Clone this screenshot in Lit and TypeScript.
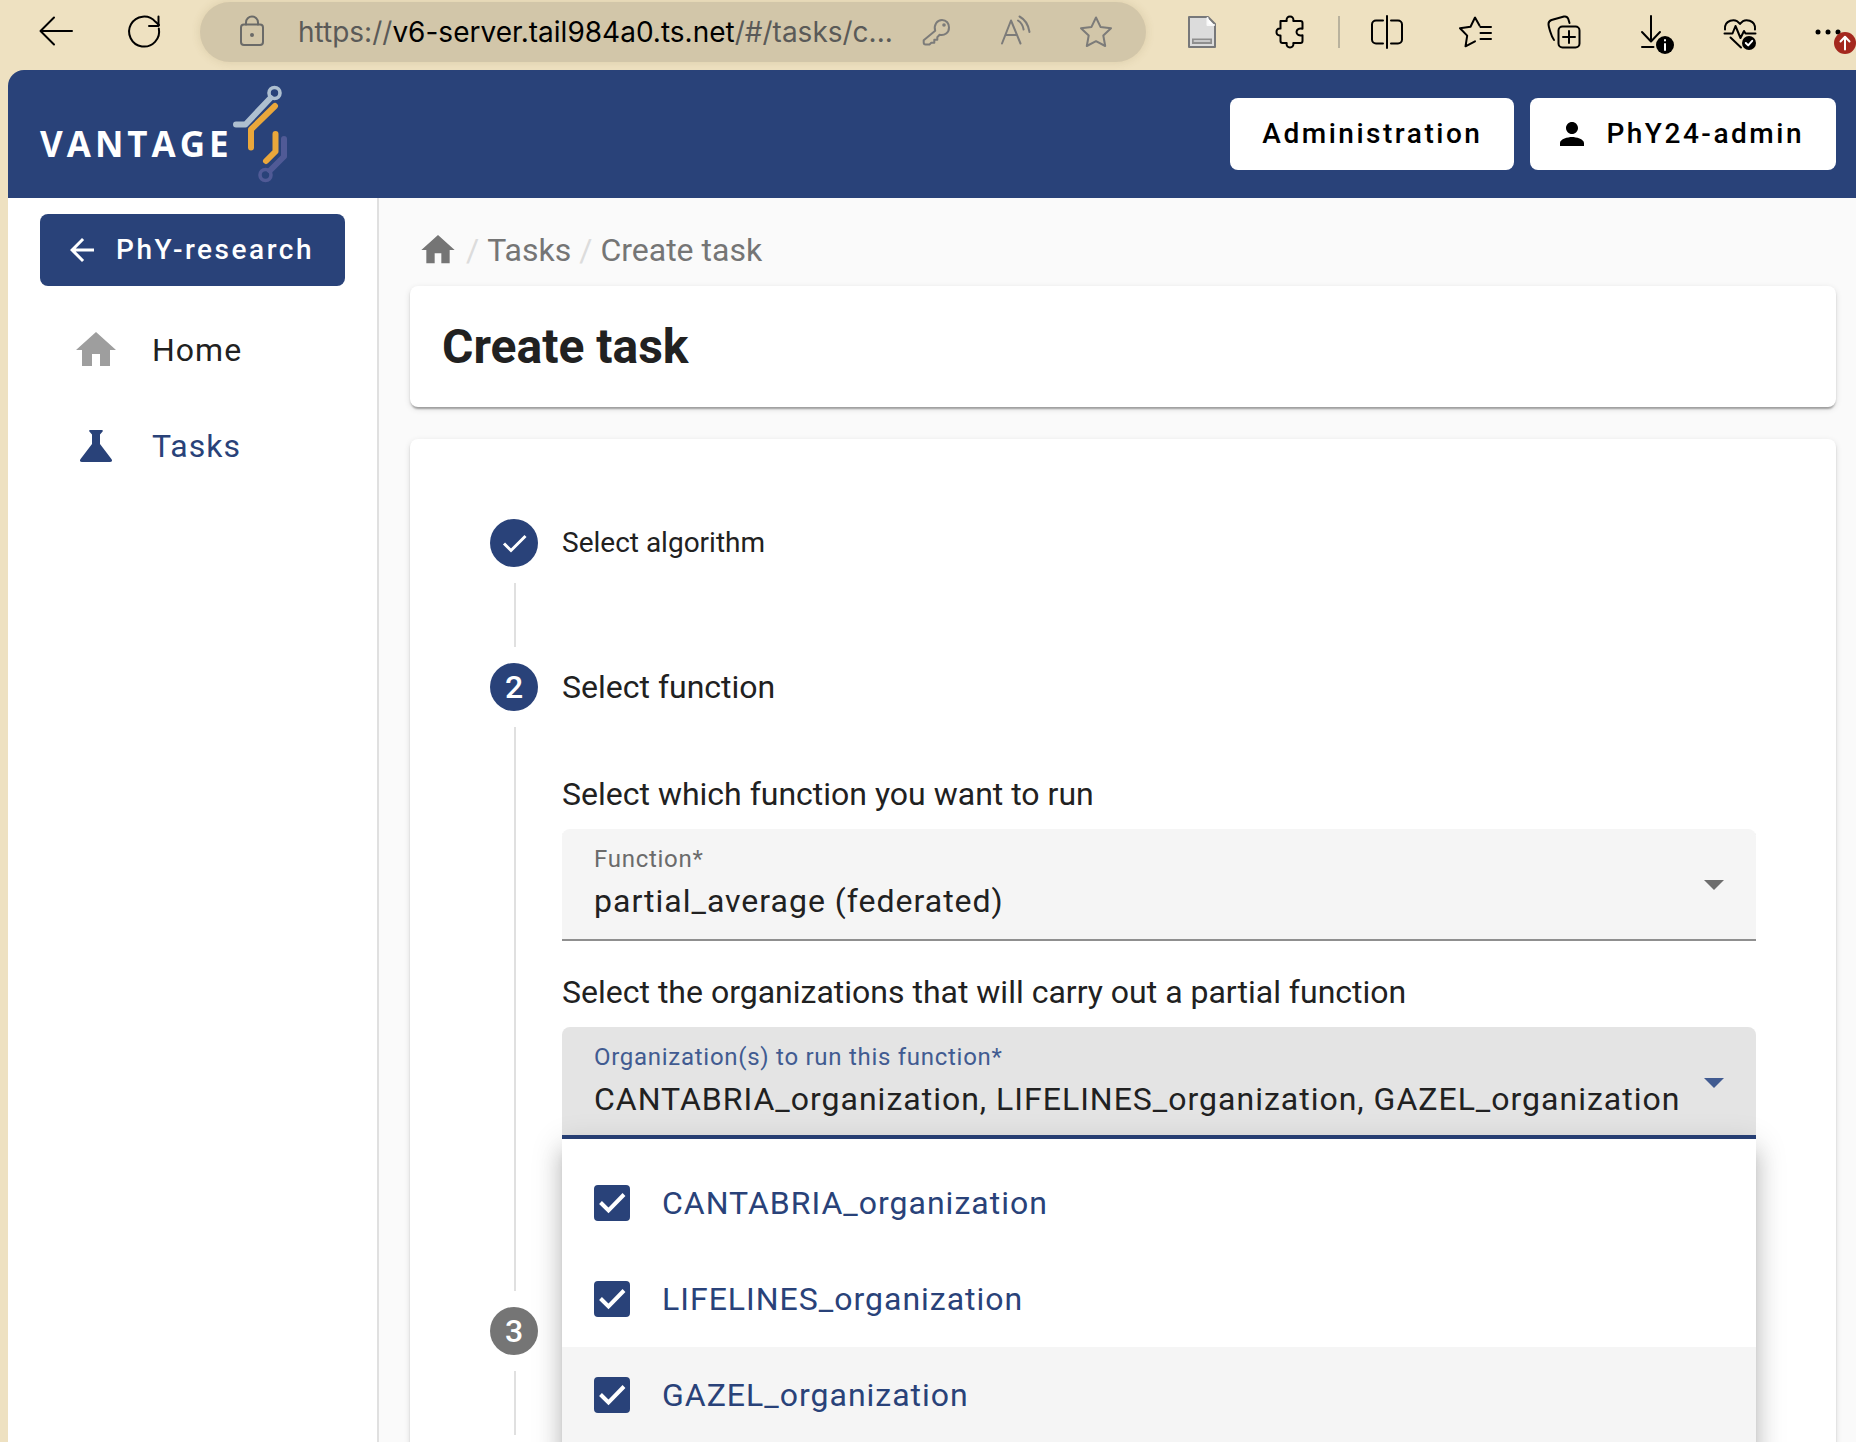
import { LitElement, html, svg, css } from "lit";
import { customElement, property, state } from "lit/decorators.js";
import { classMap } from "lit/directives/class-map.js";

/* Line icons for the browser toolbar, drawn on a 40 x 40 grid. */
const toolbarIcons: Record<string, unknown> = {
  back: svg`<path d="M36 19H5M18 5.500L4.500 19L18 32.500" />`,
  reload: svg`<path d="M34.800 16.500A15 15 0 1 1 31.500 9.800L35 13" /><path d="M34.500 4.500V14H25" />`,
  lock: svg`<rect x="9" y="12.500" width="22" height="20.500" rx="3" /><path d="M14 12.500V10.500a6 6 0 0 1 12 0V12.500" /><circle class="fill" cx="20" cy="23" r="2" />`,
  key: svg`<path d="M19.200 18.800C17.500 13 21 8 26 8c4.500 0 7 3.600 7 7.400 0 5.200-4.400 8.600-9.400 7.400l-2.300 2.400v2.600h-3v3h-3l-1.800 1.700H9.500c-1.300 0-1.800-.7-1.800-2v-2.300z" /><circle class="fill" cx="28" cy="13" r="1.800" />`,
  read: svg`<path d="M6 31.500L15 8.500L24.500 31.500M9.500 23H21" /><path d="M22 8.500c3 2 5 5.200 5.600 9M23.500 4.500c5.500 3 9 8.500 10 15.500" />`,
  star: svg`<path d="M20 5.500l4.500 9.400 10.500 1.400-7.700 7.200 1.900 10.500L20 29.200 10.800 34l1.900-10.500L5 16.300l10.500-1.400z" />`,
  page: svg`<path class="sheet" d="M7 5h19l7 7v23H7z" /><path class="fold" d="M25.500 6v7H32" /><rect class="band" x="10" y="26.500" width="20" height="5.500" /><path class="bandline" d="M12.500 29h15" />`,
  puzzle: svg`<path d="M10.500 9h6.200c-.7-3 1.300-4.500 3.300-4.500s4 1.500 3.300 4.500h7.200c1.200 0 2 .8 2 2v5.800c-3.400-1.200-6 .8-6 3.200s2.600 4.400 6 3.200V29c0 1.200-.8 2-2 2h-7.200c.7 3-1.300 4.500-3.300 4.500S16 34 16.700 31h-4.200c-1.200 0-2-.8-2-2v-5.600C7 23.700 6.500 21.500 6.500 20s.5-3.700 4-3.400z" />`,
  split: svg`<path d="M20 4v32M16 8.500H9a4 4 0 0 0-4 4v15a4 4 0 0 0 4 4h7M24 8.500h7a4 4 0 0 1 4 4v15a4 4 0 0 1-4 4h-7" />`,
  favorites: svg`<path d="M24.500 13.500L20 5.500l-4.500 9.300L5 16.300l7.200 7.300-1.700 10.700 9.500-5M25.500 15H36M25.500 21H36M25.500 27H36" />`,
  collections: svg`<rect x="15.500" y="14.500" width="21" height="21" rx="4" /><path d="M26 19v12M20 25h12M11 28C8 24 5.500 14 5.500 12c0-2 1-3.300 3-4L21 4.500c2.300-.5 3.500.5 4.300 2.500l1.200 4" />`,
  download: svg`<path d="M20 4v25M11 20l9 9.500L29 20M11 35h11.500" /><circle class="fill" cx="34" cy="33" r="9" /><path class="cut" d="M34 32v6M34 28v.6" />`,
  health: svg`<path d="M6 17.500c-1-9 10-12.500 15-5.500 5-7 16-3.500 15 5.500M5.500 21.500h8l3-7.500 5 12 3.500-7 1.500 2.500H36.500M11.500 25.500L22 35.500" /><circle class="fill" cx="30" cy="31" r="7" /><path class="cut" d="M26.800 31l2.400 2.400 4-4.600" />`,
  more: svg`<circle class="fill" cx="11" cy="20" r="2.500" /><circle class="fill" cx="21" cy="20" r="2.500" /><circle class="fill" cx="31" cy="20" r="2.500" /><circle class="alert" cx="38" cy="31" r="11" /><path class="cut" d="M38 37.500V25M33.500 29.500L38 24.800l4.500 4.700" />`,
};

@customElement("tool-icon")
class ToolIcon extends LitElement {
  static styles = css`
    :host { display: block; width: 40px; height: 40px; flex: none; }
    svg { display: block; width: 100%; height: 100%; overflow: visible; fill: none; stroke: currentColor; stroke-width: 2; stroke-linejoin: round; stroke-linecap: round; }
    .fill { fill: currentColor; stroke: none; }
    .cut { stroke: #fff; }
    .alert { fill: #a4281e; stroke: none; }
    .sheet { fill: #dcdcdc; stroke: #77787a; }
    .fold { fill: #fff; stroke: #f8f8f8; }
    .band { fill: #8e8e8e; stroke: none; }
    .bandline { stroke: #c9c9c9; }
  `;
  @property() name = "";
  render() {
    return html`<svg viewBox="0 0 40 40" aria-hidden="true">${toolbarIcons[this.name]}</svg>`;
  }
}

@customElement("browser-bar")
class BrowserBar extends LitElement {
  static styles = css`
    :host { display: block; }
    .bar { display: flex; align-items: center; height: 70px; padding: 0 0 0 12px; box-sizing: border-box; background: #eee1c1; overflow: hidden; }
    .tool { display: flex; align-items: center; justify-content: center; width: 88px; height: 60px; margin: 0 0 6px; padding: 0; border: 0; background: none; color: #000; flex: none; }
    .last { width: 73px; justify-content: flex-start; padding-left: 24px; box-sizing: border-box; }
    .address { display: flex; align-items: center; flex: 1; min-width: 0; height: 60px; margin: 0 12px 6px; padding: 0 10px 0 32px; box-sizing: border-box; border-radius: 30px; background: #d2c6a9; box-shadow: 0 0 10px rgba(120, 100, 50, 0.16); color: #6a6a68; }
    .url { flex: 1; min-width: 0; margin-left: 26px; overflow: hidden; white-space: nowrap; font: 28px/40px Inter, sans-serif; color: #5a5a58; }
    .host { color: #000; }
    .inner { width: 80px; color: #7c7b79; }
    .address .tool { margin: 0; }
    .divider { width: 2px; height: 32px; margin: 0 3px 6px 4px; background: #b9b29d; flex: none; }
  `;
  private tool(name: string, label: string, extra = "") {
    return html`<button class="tool ${extra}" type="button" aria-label=${label}><tool-icon name=${name}></tool-icon></button>`;
  }
  render() {
    return html`
      <div class="bar">
        ${this.tool("back", "Back")} ${this.tool("reload", "Reload")}
        <div class="address">
          <tool-icon name="lock"></tool-icon>
          <div class="url" role="textbox" tabindex="0" aria-label="Address">https://<span class="host">v6-server.tail984a0.ts.net</span>/#/tasks/c...</div>
          ${this.tool("key", "Passwords", "inner")} ${this.tool("read", "Read aloud", "inner")} ${this.tool("star", "Add favorite", "inner")}
        </div>
        ${this.tool("page", "Page extension")} ${this.tool("puzzle", "Extensions")}
        <span class="divider"></span>
        ${this.tool("split", "Split screen")} ${this.tool("favorites", "Favorites")} ${this.tool("collections", "Collections")}
        ${this.tool("download", "Downloads")} ${this.tool("health", "Browser essentials")} ${this.tool("more", "Settings and more", "last")}
      </div>
    `;
  }
}

const materialIcons: Record<string, string> = {
  home: "M10 20v-6h4v6h5v-8h3L12 3 2 12h3v8z",
  back: "M20 11H7.830l5.590-5.590L12 4l-8 8 8 8 1.410-1.410L7.830 13H20z",
  person: "M12 12c2.210 0 4-1.790 4-4s-1.790-4-4-4-4 1.790-4 4 1.790 4 4 4zm0 2c-2.670 0-8 1.340-8 4v2h16v-2c0-2.660-5.330-4-8-4z",
  science: "M9 4h6c.4 0 .6.500.3.800L14 6.200V11l5.800 7.600c.5.700.1 1.400-.8 1.400H5c-.9 0-1.300-.7-.8-1.400L10 11V6.200L8.700 4.800C8.400 4.500 8.600 4 9 4z",
};

const glyph = (name: string, cls: string) =>
  html`<svg class=${cls} viewBox="0 0 24 24" fill="currentColor" aria-hidden="true"><path d=${materialIcons[name]} /></svg>`;

@customElement("app-header")
class AppHeader extends LitElement {
  static styles = css`
    :host { display: block; }
    .header { display: flex; align-items: center; gap: 16px; height: 128px; padding: 0 20px 0 32px; box-sizing: border-box; border-top-left-radius: 16px; background: #294279; }
    .brand { display: flex; align-items: center; margin-right: auto; color: #fff; text-decoration: none; }
    .word { padding-top: 20px; font: 700 35px/40px "Open Sans", sans-serif; letter-spacing: 4px; }
    .mark { width: 58px; height: 100px; fill: none; stroke-linecap: round; stroke-linejoin: round; }
    .action { display: flex; align-items: center; gap: 16px; height: 72px; padding: 0 32px; border: 0; border-radius: 8px; background: #fff; color: #000; font: 500 28px/40px Roboto, sans-serif; letter-spacing: 0.09em; white-space: nowrap; }
    .with-icon { padding-left: 24px; }
    .icon { width: 36px; height: 36px; }
  `;
  render() {
    return html`
      <header class="header">
        <a class="brand" href="#/">
          <span class="word">VANTAGE</span>
          <svg class="mark" viewBox="233 84 58 100" aria-hidden="true">
            <g stroke="#aebfd0"><path stroke-width="6" d="M236 124.500h9.500L270.500 98" /><circle cx="274.500" cy="93" r="5.500" stroke-width="3.600" /></g>
            <g stroke="#eaa73b" stroke-width="6"><path d="M275 106L251 129.500V147.500" /><path d="M275.500 134V151.500L266 161" /></g>
            <g stroke="#505a96"><path stroke-width="6" d="M284 139V156.500L270 170.500" /><circle cx="265.500" cy="175" r="5.500" stroke-width="3.600" /></g>
          </svg>
        </a>
        <button class="action" type="button">Administration</button>
        <button class="action with-icon" type="button">${glyph("person", "icon")}PhY24-admin</button>
      </header>
    `;
  }
}

@customElement("side-nav")
class SideNav extends LitElement {
  static styles = css`
    :host { display: block; flex: none; width: 369px; border-right: 2px solid #e0e0e0; background: #fff; font-family: Roboto, sans-serif; }
    .nav { display: flex; flex-direction: column; padding: 16px 32px; }
    .up { display: flex; align-items: center; gap: 16px; height: 72px; margin-bottom: 16px; padding: 0 24px; border: 0; border-radius: 8px; background: #294279; color: #fff; font: 500 28px/40px Roboto, sans-serif; letter-spacing: 0.09em; white-space: nowrap; }
    .small { width: 36px; height: 36px; flex: none; }
    .item { display: flex; align-items: center; gap: 32px; height: 96px; padding: 0 32px; color: #212121; font-size: 32px; line-height: 48px; letter-spacing: 1px; text-decoration: none; }
    .large { width: 48px; height: 48px; color: #9e9e9e; }
    .active, .active .large { color: #294279; }
  `;
  render() {
    return html`
      <nav class="nav">
        <button class="up" type="button">${glyph("back", "small")}PhY-research</button>
        <a class="item" href="#/home">${glyph("home", "large")}Home</a>
        <a class="item active" href="#/tasks" aria-current="page">${glyph("science", "large")}Tasks</a>
      </nav>
    `;
  }
}

@customElement("task-stepper")
class TaskStepper extends LitElement {
  static styles = css`
    :host { display: block; color: #212121; font-family: Roboto, sans-serif; }
    .steps { display: flex; flex-direction: column; margin: 0; padding: 0; list-style: none; }
    .step { display: grid; grid-template-columns: 48px 1fr; column-gap: 24px; }
    .rail { display: flex; flex-direction: column; align-items: center; gap: 16px; padding-top: 48px; }
    .badge { display: grid; place-items: center; width: 48px; height: 48px; flex: none; border-radius: 50%; background: #294279; color: #fff; font-size: 32px; line-height: 48px; font-weight: 500; }
    .pending { background: #757575; }
    .check { width: 48px; height: 48px; fill: none; stroke: #fff; stroke-width: 3; }
    .line { width: 2px; flex: 1; min-height: 64px; margin-left: 2px; margin-bottom: -32px; background: #e0e0e0; }
    .body { min-width: 0; }
    .title { display: flex; align-items: center; height: 144px; margin: 0; font-size: 28px; line-height: 40px; font-weight: 400; }
    .current { font-size: 32px; }
    .content { padding: 12px 0 120px; }
    .prompt { margin: 0 0 12px; font-size: 32px; line-height: 46px; font-weight: 400; }
    .field { display: flex; align-items: center; height: 112px; padding: 0 32px; box-sizing: border-box; border-radius: 8px 8px 0 0; background: #f5f5f5; box-shadow: inset 0 -2px #8f8f8f; }
    .field + .prompt { margin-top: 28px; }
    .text { display: flex; flex-direction: column; gap: 4px; flex: 1; min-width: 0; }
    .label { font-size: 24px; line-height: 28px; letter-spacing: 0.03em; color: #6b6b6b; }
    .value { width: 100%; height: 48px; margin: 0; padding: 0; border: 0; outline: 0; appearance: none; background: none; color: #212121; font: 32px/48px Roboto, sans-serif; letter-spacing: 1px; text-align: left; white-space: nowrap; }
    .arrow { width: 20px; height: 10px; fill: #6e6e6e; flex: none; }
    .open { background: #e4e4e4; box-shadow: inset 0 -4px #294279; }
    .open .label { color: #415b91; }
    .open .arrow { fill: #415b91; }
    .anchor { position: relative; }
    .panel { position: absolute; top: 100%; left: 0; right: 0; z-index: 1; padding: 16px 0; background: #fff; box-shadow: 0 10px 10px -6px rgba(0, 0, 0, 0.2), 0 16px 20px 2px rgba(0, 0, 0, 0.14), 0 6px 28px 4px rgba(0, 0, 0, 0.12); }
    .option { display: flex; align-items: center; gap: 32px; height: 96px; padding: 0 32px; color: #294279; font-size: 32px; line-height: 48px; letter-spacing: 1px; }
    .hover { background: #f5f5f5; }
    .box { display: grid; width: 36px; height: 36px; }
    .input { grid-area: 1 / 1; width: 36px; height: 36px; margin: 0; appearance: none; border: 4px solid #757575; border-radius: 4px; }
    .input:checked { border-color: #294279; background: #294279; }
    .tick { grid-area: 1 / 1; width: 36px; height: 36px; fill: none; stroke: #fff; stroke-width: 4; pointer-events: none; }
  `;
  @state() private organizations = [
    { name: "CANTABRIA_organization", checked: true },
    { name: "LIFELINES_organization", checked: true },
    { name: "GAZEL_organization", checked: true },
  ];
  private toggle(index: number) {
    this.organizations = this.organizations.map((o, i) => (i === index ? { ...o, checked: !o.checked } : o));
  }
  private arrow() {
    return html`<svg class="arrow" viewBox="0 0 20 10" aria-hidden="true"><path d="M0 0h20L10 10z" /></svg>`;
  }
  render() {
    const selected = this.organizations.filter((o) => o.checked).map((o) => o.name).join(", ");
    return html`
      <ol class="steps">
        <li class="step">
          <div class="rail">
            <span class="badge"><svg class="check" viewBox="0 0 48 48" aria-hidden="true"><path d="M14 24.500l7 7L35.500 17" /></svg></span>
            <span class="line"></span>
          </div>
          <div class="body"><h2 class="title">Select algorithm</h2></div>
        </li>
        <li class="step">
          <div class="rail"><span class="badge">2</span><span class="line"></span></div>
          <div class="body">
            <h2 class="title current">Select function</h2>
            <div class="content">
              <h3 class="prompt">Select which function you want to run</h3>
              <div class="field">
                <div class="text">
                  <label class="label" for="function">Function*</label>
                  <select class="value" id="function"><option>partial_average (federated)</option></select>
                </div>
                ${this.arrow()}
              </div>
              <h3 class="prompt">Select the organizations that will carry out a partial function</h3>
              <div class="anchor">
                <div class="field open">
                  <div class="text">
                    <label class="label" for="organizations">Organization(s) to run this function*</label>
                    <button class="value" id="organizations" type="button" role="combobox" aria-expanded="true" aria-controls="choices">${selected}</button>
                  </div>
                  ${this.arrow()}
                </div>
                <div class="panel" id="choices">
                  ${this.organizations.map(
                    (o, i) => html`
                      <label class=${classMap({ option: true, hover: i === 2 })}>
                        <span class="box">
                          <input class="input" type="checkbox" .checked=${o.checked} @change=${() => this.toggle(i)} />
                          <svg class="tick" viewBox="0 0 36 36" aria-hidden="true"><path d="M6.500 17.500l8 8L30 9.500" /></svg>
                        </span>
                        ${o.name}
                      </label>
                    `
                  )}
                </div>
              </div>
            </div>
          </div>
        </li>
        <li class="step">
          <div class="rail"><span class="badge pending">3</span><span class="line"></span></div>
          <div class="body"></div>
        </li>
      </ol>
    `;
  }
}

@customElement("app-root")
class AppRoot extends LitElement {
  static styles = css`
    :host { display: block; font-family: Roboto, sans-serif; }
    .window { display: flex; flex-direction: column; height: 100vh; overflow: hidden; background: #eee1c1; }
    .page { display: flex; flex-direction: column; flex: 1; min-height: 0; margin-left: 8px; }
    .columns { display: flex; flex: 1; min-height: 0; }
    .main { display: flex; flex-direction: column; flex: 1; min-width: 0; padding: 32px 20px 0 31px; overflow: hidden; background: #fafafa; }
    .crumbs { display: flex; align-items: center; gap: 8px; height: 40px; margin-bottom: 16px; padding-left: 8px; flex: none; font-size: 32px; line-height: 38px; color: #757575; }
    .crumb { display: flex; color: inherit; text-decoration: none; }
    .home { width: 40px; height: 40px; }
    .slash { color: #dcdcdc; }
    .card { flex: none; border-radius: 8px; background: #fff; box-shadow: 0 4px 2px -2px rgba(0, 0, 0, 0.2), 0 2px 2px 0 rgba(0, 0, 0, 0.14), 0 2px 6px 0 rgba(0, 0, 0, 0.12); }
    .heading { margin-bottom: 32px; padding: 32px; }
    .title { margin: 0; font-size: 48px; line-height: 57px; font-weight: 700; color: #212121; }
    .stepper { padding: 32px 80px 96px; }
  `;
  render() {
    return html`
      <div class="window">
        <browser-bar></browser-bar>
        <div class="page">
          <app-header></app-header>
          <div class="columns">
            <side-nav></side-nav>
            <main class="main">
              <nav class="crumbs" aria-label="Breadcrumb">
                <a class="crumb" href="#/home" aria-label="Home">${glyph("home", "home")}</a>
                <span class="slash">/</span><a class="crumb" href="#/tasks">Tasks</a>
                <span class="slash">/</span><span>Create task</span>
              </nav>
              <section class="card heading"><h1 class="title">Create task</h1></section>
              <section class="card stepper"><task-stepper></task-stepper></section>
            </main>
          </div>
        </div>
      </div>
    `;
  }
}
